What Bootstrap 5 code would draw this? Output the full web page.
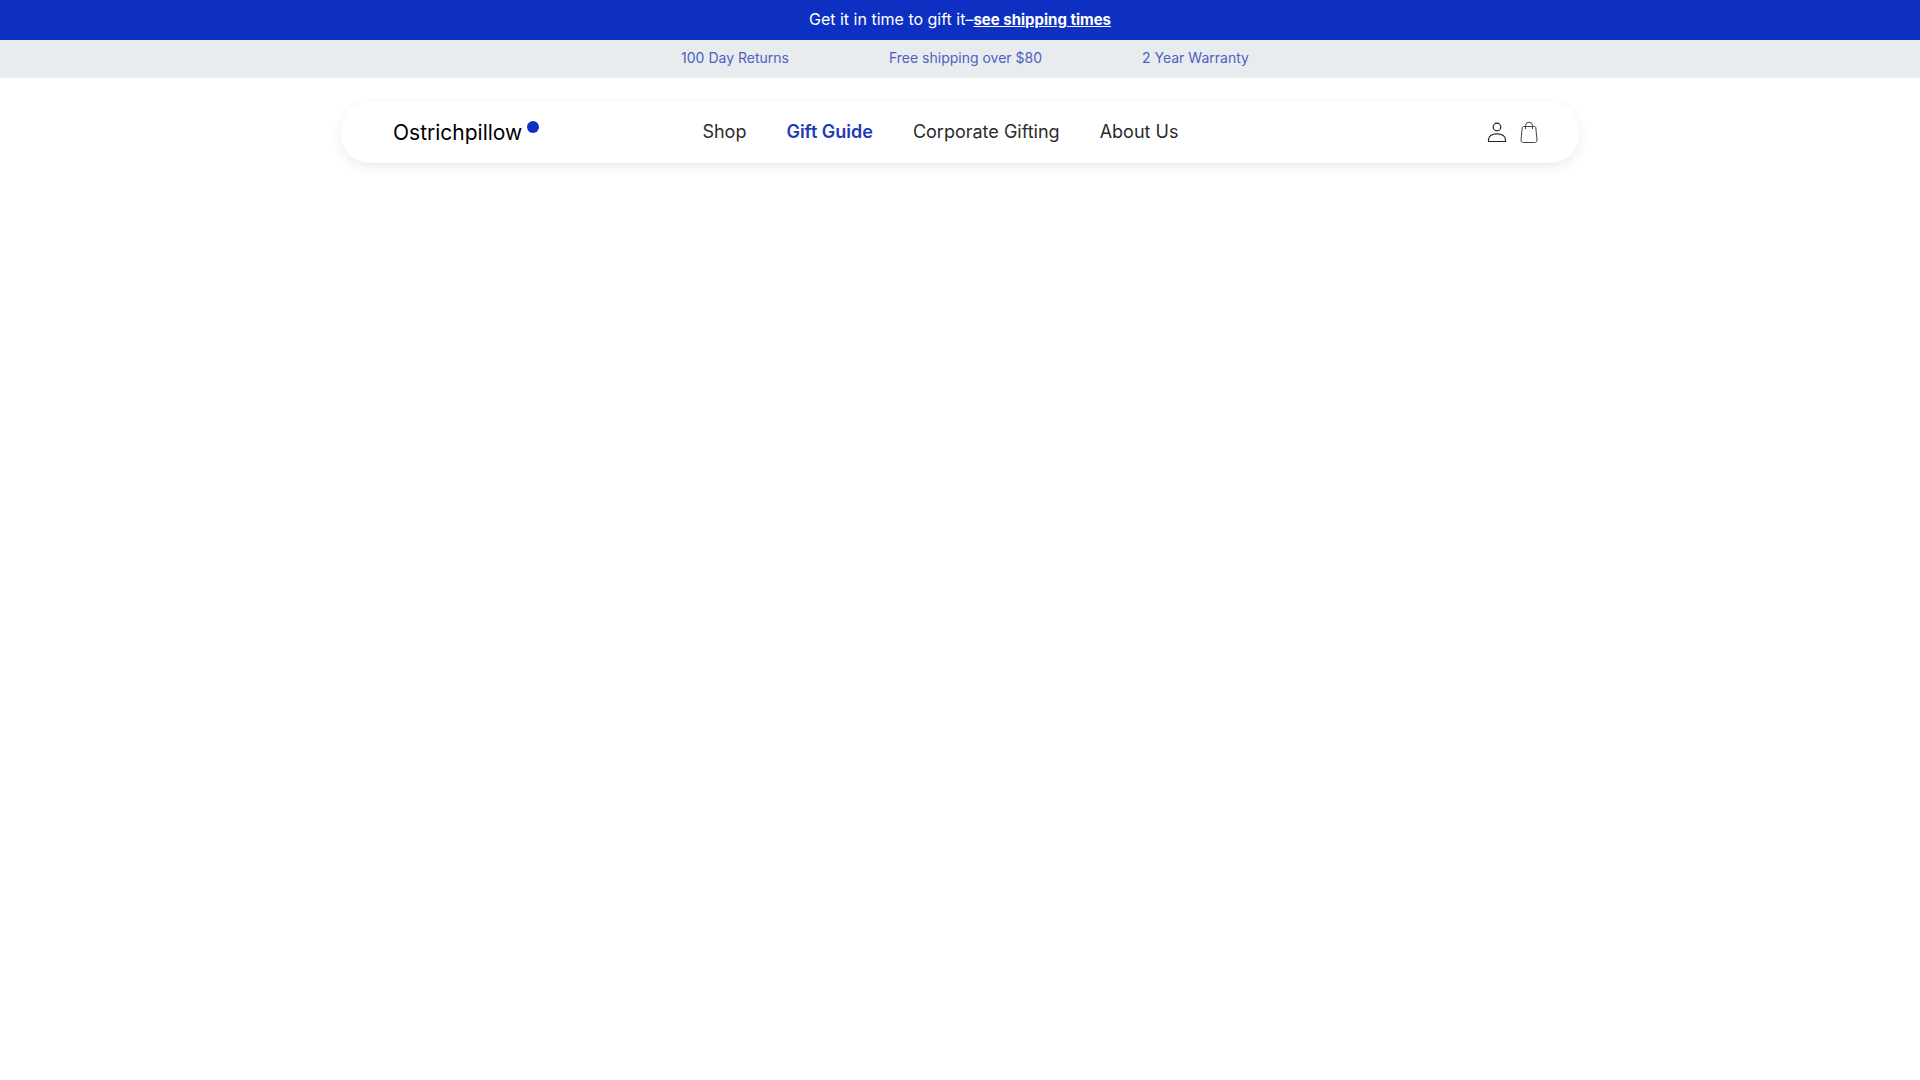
<!DOCTYPE html>
<html lang="en">
<head>
<meta charset="utf-8">
<meta name="viewport" content="width=device-width, initial-scale=1">
<title>Ostrichpillow</title>
<link href="https://cdn.jsdelivr.net/npm/bootstrap@5.3.0/dist/css/bootstrap.min.css" rel="stylesheet">
<style>
  :root { --brand: #0e30c2; }
  body { font-family: Inter, "Liberation Sans", sans-serif; color: #222; background: #fff; }
  .promo-bar { background: var(--brand); font-size: 16px; line-height: 24px; padding: 7px 16px 8px; }
  .promo-bar a { font-size: 15px; }
  .perks-bar { background: #e8ecef; color: #4f60bf; font-size: 14px; line-height: 20px; padding: 8px 16px 10px 26px; column-gap: 100px; }
  .site-header { max-width: 1262px; padding: 24px 12px 32px; }
  .header-panel { padding: 14px 40px 13px 52px; border-radius: 28px; background: #fff; box-shadow: 0 4px 12px rgba(20, 40, 80, .09); }
  .brand-link { color: #000; font-size: 21px; line-height: 32px; gap: 5px; }
  .brand-dot { width: 12px; height: 12px; margin-top: 4px; }
  .main-menu { column-gap: 40px; font-size: 18px; line-height: 32px; padding-bottom: 2px; }
  .main-menu a { color: #2b2b2b; }
  .main-menu a.current { color: #1c3bb5; font-weight: 600; }
  .brand-col { flex: 0 0 27%; }
  .header-icons { gap: 12px; }
</style>
</head>
<body class="min-vh-100">
<div class="promo-bar text-center text-white">Get it in time to gift it–<a href="#shipping" class="text-white fw-bold">see shipping times</a></div>
<ul class="perks-bar list-unstyled d-flex flex-wrap justify-content-center mb-0">
  <li>100 Day Returns</li>
  <li>Free shipping over $80</li>
  <li>2 Year Warranty</li>
</ul>
<header class="site-header container-fluid">
  <div class="header-panel d-flex align-items-center">
    <div class="brand-col d-flex">
      <a href="#home" class="brand-link d-inline-flex align-items-start text-decoration-none">Ostrichpillow
        <svg class="brand-dot" viewBox="0 0 12 12" aria-hidden="true"><circle cx="6" cy="6" r="6" fill="#0e30c2"/></svg>
      </a>
    </div>
    <nav aria-label="Main">
      <ul class="main-menu list-unstyled d-flex mb-0">
        <li><a href="#shop" class="text-decoration-none">Shop</a></li>
        <li><a href="#gift-guide" class="current text-decoration-none">Gift Guide</a></li>
        <li><a href="#corporate" class="text-decoration-none">Corporate Gifting</a></li>
        <li><a href="#about" class="text-decoration-none">About Us</a></li>
      </ul>
    </nav>
    <div class="header-icons d-flex ms-auto">
      <a href="#account" class="d-flex" aria-label="Account">
        <svg width="20" height="24" viewBox="0 0 20 24" fill="none" stroke="#222" stroke-width="1.2"><circle cx="10" cy="6" r="3.8"/><path d="M1.500 20.500v-1.600c0-3.600 3.200-6.100 8.500-6.100s8.500 2.500 8.500 6.100v1.600z"/></svg>
      </a>
      <a href="#cart" class="d-flex" aria-label="Cart">
        <svg width="20" height="24" viewBox="0 0 20 24" fill="none" stroke="#444" stroke-width="1"><path d="M4.500 5.500h11c.8 0 1.200.5 1.300 1.200l1.200 12.300c.1 1.500-.8 2.500-2.200 2.500H4.200C2.800 21.500 1.900 20.500 2 19L3.200 6.700C3.300 6 3.700 5.500 4.500 5.500z"/><path d="M6.500 8V4.700a3.500 3.500 0 0 1 7 0V8"/></svg>
      </a>
    </div>
  </div>
</header>
<script src="https://cdn.jsdelivr.net/npm/bootstrap@5.3.0/dist/js/bootstrap.bundle.min.js"></script>
</body>
</html>
